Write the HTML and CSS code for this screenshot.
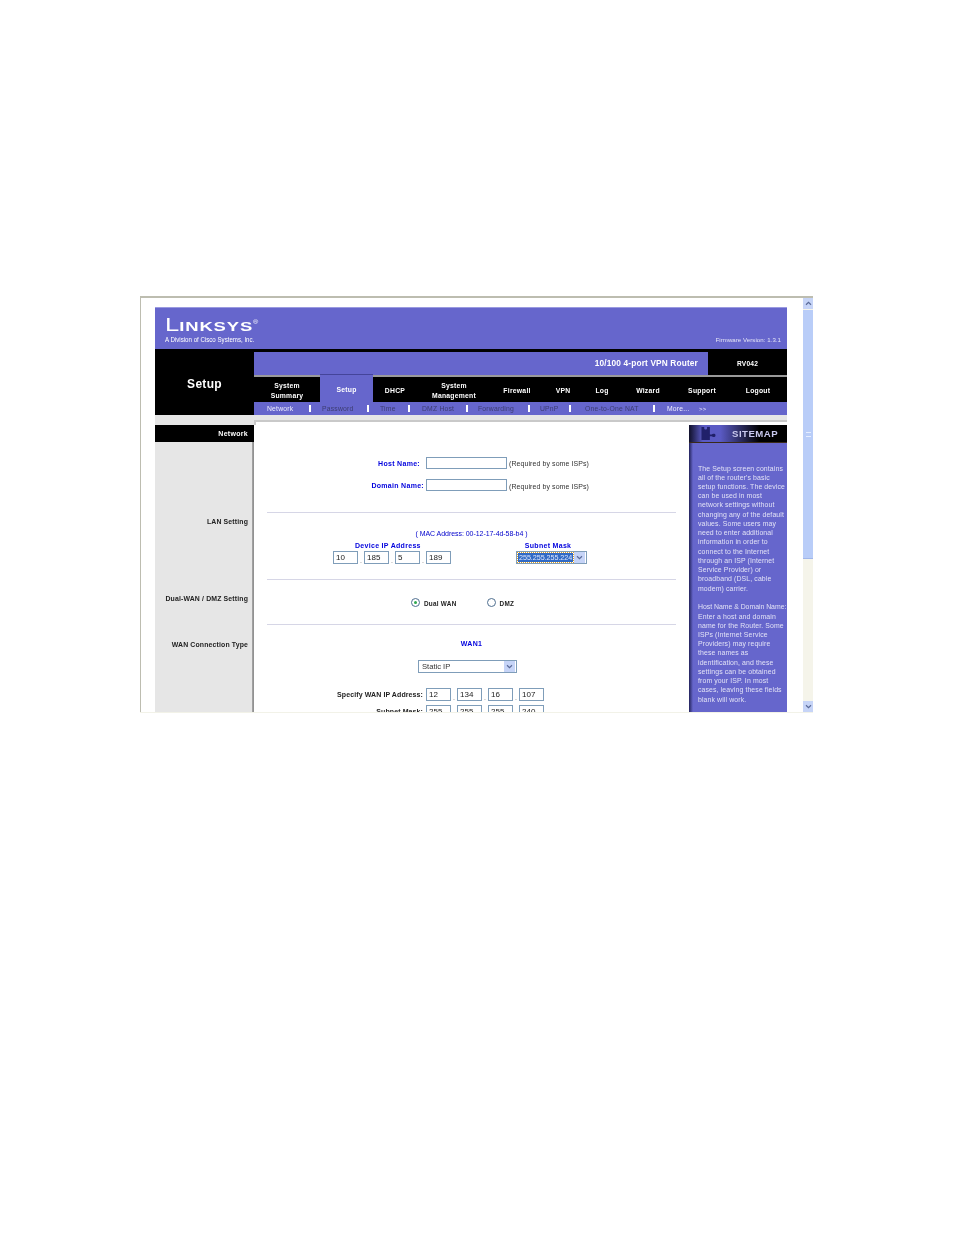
FILE: index.html
```html
<!DOCTYPE html>
<html lang="en">
<head>
<meta charset="utf-8">
<title>Linksys RV042 Setup</title>
<link rel="stylesheet" href="styles.css">
</head>
<body>
<div class="window">
  <div class="viewport">
    <header class="brand">
      <div class="logo"><div class="logo-word"><span class="cap">L</span>INKSYS<sup>®</sup></div><div class="logo-sub">A Division of Cisco Systems, Inc.</div></div>
      <div class="firmware">Firmware Version: 1.3.1</div>
    </header>
    <div class="masthead">
      <div class="page-title">Setup</div>
      <div class="mast-right">
        <div class="product"><div class="product-name">10/100 4-port VPN Router</div><div class="model">RV042</div></div>
        <nav class="tabs">
          <div class="tab">System<br>Summary</div>
          <div class="tab tab-active">Setup</div>
          <div class="tab">DHCP</div>
          <div class="tab">System<br>Management</div>
          <div class="tab">Firewall</div>
          <div class="tab">VPN</div>
          <div class="tab">Log</div>
          <div class="tab">Wizard</div>
          <div class="tab">Support</div>
          <div class="tab">Logout</div>
        </nav>
        <nav class="subnav">
          <span class="sub sub-on s1">Network</span><i class="sep"></i>
          <span class="sub s2">Password</span><i class="sep"></i>
          <span class="sub s3">Time</span><i class="sep"></i>
          <span class="sub s4">DMZ Host</span><i class="sep"></i>
          <span class="sub s5">Forwarding</span><i class="sep"></i>
          <span class="sub s6">UPnP</span><i class="sep"></i>
          <span class="sub s7">One-to-One NAT</span><i class="sep"></i>
          <span class="sub sub-on s8">More...</span><span class="sub sub-on s9">&gt;&gt;</span>
        </nav>
      </div>
    </div>
    <div class="band"><div class="band-left"></div><div class="band-right"></div></div>
    <div class="columns">
      <aside class="labels">
        <div class="labels-head">Network</div>
        <div class="label l-lan">LAN Setting</div>
        <div class="label l-dual">Dual-WAN / DMZ Setting</div>
        <div class="label l-wan">WAN Connection Type</div>
      </aside>
      <main class="form">
        <div class="row r-host"><label class="blue field-label pr6">Host Name:</label><input class="text-long" type="text"><span class="hint">(Required by some ISPs)</span></div>
        <div class="row r-domain"><label class="blue field-label pr2">Domain Name:</label><input class="text-long" type="text"><span class="hint">(Required by some ISPs)</span></div>
        <hr class="rule r1">
        <div class="mac">( MAC Address: 00-12-17-4d-58-b4 )</div>
        <div class="row r-caps"><span class="blue cap-ip">Device IP Address</span><span class="blue cap-mask">Subnet Mask</span></div>
        <div class="row r-ip">
          <input class="octet" type="text" value="10"><i class="dot">.</i><input class="octet" type="text" value="185"><i class="dot">.</i><input class="octet" type="text" value="5"><i class="dot">.</i><input class="octet" type="text" value="189">
          <div class="select sel-mask"><span class="sel-value">255.255.255.224</span><span class="sel-btn"><svg viewBox="0 0 8 6" class="chev"><path d="M1 1.5 4 4.5 7 1.5" /></svg></span></div>
        </div>
        <hr class="rule r2">
        <div class="row r-radio">
          <span class="radio radio-on"></span><span class="radio-text">Dual WAN</span>
          <span class="radio radio-b"></span><span class="radio-text">DMZ</span>
        </div>
        <hr class="rule r3">
        <div class="wan-title blue">WAN1</div>
        <div class="row r-type"><div class="select sel-type"><span class="plain">Static IP</span><span class="sel-btn"><svg viewBox="0 0 8 6" class="chev"><path d="M1 1.5 4 4.5 7 1.5" /></svg></span></div></div>
        <div class="row r-wan"><label class="field-label pr3 strong">Specify WAN IP Address:</label><input class="octet" type="text" value="12"><i class="dot">.</i><input class="octet" type="text" value="134"><i class="dot">.</i><input class="octet" type="text" value="16"><i class="dot">.</i><input class="octet" type="text" value="107"></div>
        <div class="row r-mask"><label class="field-label pr3 strong">Subnet Mask:</label><input class="octet" type="text" value="255"><i class="dot">.</i><input class="octet" type="text" value="255"><i class="dot">.</i><input class="octet" type="text" value="255"><i class="dot">.</i><input class="octet" type="text" value="240"></div>
      </main>
      <aside class="sitemap">
        <div class="sitemap-head">
          <svg class="puzzle" viewBox="0 0 18 16"><path d="M2 1h3v2c0 1 3 1 3 0V1h3v8h2c1-1 4-1 4 1s-3 2-4 1h-2v4H2z"/></svg>
          <span>SITEMAP</span>
        </div>
        <p class="help first">The Setup screen contains<br>all of the router's basic<br>setup functions. The device<br>can be used in most<br>network settings without<br>changing any of the default<br>values. Some users may<br>need to enter additional<br>information in order to<br>connect to the Internet<br>through an ISP (Internet<br>Service Provider) or<br>broadband (DSL, cable<br>modem) carrier.</p>
        <p class="help"><span class="help-title">Host Name &amp; Domain Name:</span><br>Enter a host and domain<br>name for the Router. Some<br>ISPs (Internet Service<br>Providers) may require<br>these names as<br>identification, and these<br>settings can be obtained<br>from your ISP. In most<br>cases, leaving these fields<br>blank will work.</p>
      </aside>
    </div>
  </div>
  <div class="scrollbar">
    <div class="sb-btn"><svg viewBox="0 0 8 6" class="chev"><path d="M1 4.5 4 1.5 7 4.5" /></svg></div>
    <div class="sb-thumb"><span class="grip"></span></div>
    <div class="sb-track"></div>
    <div class="sb-btn"><svg viewBox="0 0 8 6" class="chev"><path d="M1 1.5 4 4.5 7 1.5" /></svg></div>
  </div>
</div>
</body>
</html>
```
FILE: styles.css
```css
* { box-sizing: border-box; }
html, body { margin: 0; padding: 0; background: #fff; height: 1235px; overflow: hidden; }
body { padding: 296px 0 0 140px; font-family: "Liberation Sans", Arial, sans-serif; font-size: 7px; color: #111; }

.window { width: 673px; height: 416px; display: flex; border-top: 2px solid #bdbdb0; border-left: 1px solid #bdbdb0; filter: blur(.3px); box-shadow: 0 1px 0 #f2f2e8; }
.viewport { width: 662px; height: 414px; overflow: hidden; padding: 9px 0 0 14px; background: #fff; }

.brand { width: 632px; height: 42px; background: #6666cc; border-top: 1px solid #9a9ae0; display: flex; justify-content: space-between; }
.logo { padding: 10px 0 0 10px; color: #fff; }
.logo-word { font-size: 13px; line-height: 15px; font-weight: bold; letter-spacing: .6px; transform: scaleX(1.42); transform-origin: left; white-space: nowrap; }
.logo-word .cap { font-size: 18px; font-weight: normal; line-height: 15px; letter-spacing: 0; }
.logo-word sup { font-size: 5px; font-weight: normal; vertical-align: 7px; line-height: 0; letter-spacing: 0; }
.logo-sub { font-size: 6.6px; line-height: 8px; margin-top: 2px; transform: scaleX(.93); transform-origin: left; white-space: nowrap; }
.firmware { color: #e4e4f6; font-size: 6.1px; padding: 28px 6px 0 0; letter-spacing: .05px; }

.masthead { width: 632px; height: 66px; background: #000; display: flex; }
.page-title { width: 99px; color: #fff; font-weight: bold; font-size: 12px; text-align: center; padding-top: 28px; letter-spacing: .3px; }
.mast-right { width: 533px; padding-top: 3px; }
.product { height: 23px; display: flex; background: #6666cc; }
.product-name { width: 454px; color: #fff; font-weight: bold; font-size: 8.3px; line-height: 23px; text-align: right; padding-right: 10px; letter-spacing: .15px; }
.model { width: 79px; background: #000; color: #fff; font-weight: bold; font-size: 6.6px; line-height: 23px; text-align: center; letter-spacing: .2px; }
.tabs { height: 27px; display: grid; grid-template-columns: 66px 53px 44px 74px 52px 40px 38px 54px 54px 58px; background: #000; border-top: 2px solid #9a9a9a; }
.tab { color: #fff; font-weight: bold; font-size: 6.8px; line-height: 10px; letter-spacing: .25px; text-align: center; align-self: center; }
.tab-active { align-self: stretch; background: #6666cc; border-top: 1px solid #44449a; margin-top: -3px; line-height: 30px; }
.subnav { height: 13px; background: #6666cc; display: flex; align-items: center; white-space: nowrap; font-size: 6.8px; color: #3c3c70; letter-spacing: .2px; }
.sub-on { color: #eeeeff; }
.sep { width: 2px; height: 7px; background: #fff; }
.s1 { margin-left: 13px; width: 42px; }
.s2 { margin-left: 11px; width: 45px; }
.s3 { margin-left: 11px; width: 28px; }
.s4 { margin-left: 12px; width: 44px; }
.s5 { margin-left: 10px; width: 50px; }
.s6 { margin-left: 10px; width: 29px; }
.s7 { margin-left: 14px; width: 68px; }
.s8 { margin-left: 12px; width: 32px; }
.s9 { font-size: 6px; }

.band { width: 632px; height: 10px; display: flex; background: #e6e6e6; }
.band-left { width: 99px; }
.band-right { flex: 1; margin-top: 5px; background: #fff; border-top: 2px solid #c9c9c9; box-shadow: inset 2px 0 0 #c9c9c9; }

.columns { width: 632px; display: flex; height: 300px; }
.labels { width: 99px; background: linear-gradient(to right, #e6e6e6 97px, #a8a8a8 97px, #8a8a8a); text-align: right; font-weight: bold; color: #222; letter-spacing: .15px; }
.labels-head { height: 17px; background: #000; color: #fff; line-height: 17px; padding-right: 6px; letter-spacing: .3px; }
.label { padding-right: 6px; line-height: 8px; font-size: 6.9px; }
.l-lan { margin-top: 76px; }
.l-dual { margin-top: 69px; }
.l-wan { margin-top: 38px; }

.form { width: 435px; }
.row { display: flex; align-items: center; white-space: nowrap; }
.blue { color: #0000dd; font-weight: bold; letter-spacing: .3px; }
.strong { font-weight: bold; color: #222; letter-spacing: .1px; }
.field-label { width: 172px; text-align: right; flex: none; }
.pr6 { padding-right: 6px; }
.pr2 { padding-right: 2px; }
.pr3 { padding-right: 3px; }
input { border: 1px solid #7f9db9; background: #fff; padding: 0 0 0 2px; margin: 0; font: 8px/1 "Liberation Sans", Arial, sans-serif; color: #222; border-radius: 0; outline: 0; }
.text-long { width: 81px; height: 12px; }
.hint { margin-left: 2px; letter-spacing: .08px; color: #333; padding-top: 1px; }
.r-domain .hint { padding-top: 2px; }
.r-host { margin-top: 32px; height: 12px; }
.r-domain { margin-top: 10px; height: 12px; }
.rule { border: 0; height: 1px; background: #d6d6e6; margin: 0 13px; }
.r1 { margin-top: 21px; }
.r2 { margin-top: 15px; }
.r3 { margin-top: 17px; }
.mac { margin-top: 17px; height: 8px; line-height: 8px; text-align: center; color: #0000cc; letter-spacing: -.05px; }
.r-caps { margin-top: 3px; height: 8px; padding-left: 101px; }
.cap-mask { margin-left: 104px; }
.r-ip { margin-top: 2px; height: 13px; padding-left: 79px; }
.octet { width: 25px; height: 13px; flex: none; }
.dot { width: 6px; font-style: normal; text-align: center; color: #777; padding-top: 5px; }
.select { height: 13px; border: 1px solid #7f9db9; display: flex; align-items: center; background: #fff; padding: 0 1px; }
.sel-mask { width: 71px; margin-left: 65px; }
.sel-value { flex: 1; background: #316ac5; color: #dfe8ff; font-size: 7.2px; line-height: 9px; padding: 0 1px; outline: 1px dotted #e0a020; white-space: nowrap; letter-spacing: -.05px; }
.sel-btn { width: 11px; height: 11px; background: #c6d4f7; display: flex; align-items: center; justify-content: center; flex: none; margin-left: 1px; }
.chev { width: 7px; height: 5px; fill: none; stroke: #5a6a98; stroke-width: 1.4; }
.r-radio { margin-top: 18px; height: 9px; padding-left: 157px; }
.radio { width: 9px; height: 9px; border-radius: 50%; border: 1px solid #4f6f90; background: #fff; flex: none; display: flex; align-items: center; justify-content: center; }
.radio-on::after { content: ""; width: 3px; height: 3px; border-radius: 50%; background: #2fa84f; }
.radio-text { margin-left: 4px; font-size: 6.4px; font-weight: bold; color: #222; letter-spacing: .25px; padding-top: 1px; }
.radio-b { margin-left: 30px; }
.wan-title { margin-top: 15px; height: 8px; line-height: 8px; text-align: center; }
.r-type { margin-top: 12px; height: 13px; padding-left: 164px; }
.sel-type { width: 99px; }
.plain { flex: 1; font-size: 7.6px; color: #333; padding-left: 2px; }
.r-wan { margin-top: 15px; height: 13px; }
.r-mask { margin-top: 4px; height: 13px; }

.sitemap { width: 98px; background: linear-gradient(to right, #22225a, #6666cc 4px); color: #e2e2f6; height: 300px; }
.sitemap-head { height: 17px; background: linear-gradient(to right, #10102a, #5a5ac4 14%, #5a5ac4 32%, #000 72%); border-bottom: 1px solid #3a2a18; display: flex; align-items: center; color: #c9c9ee; font-size: 9.6px; font-weight: bold; letter-spacing: .5px; box-sizing: content-box; }
.puzzle { width: 18px; height: 15px; fill: #20206a; margin-left: 10px; }
.sitemap-head span { margin-left: 15px; }
.help { margin: 0; font-size: 6.9px; line-height: 9.23px; padding-left: 9px; white-space: nowrap; letter-spacing: .12px; }
.help-title { letter-spacing: -.02px; }
.first { margin-top: 20.5px; }
.help + .help { margin-top: 9.5px; }

.scrollbar { width: 10px; height: 414px; display: flex; flex-direction: column; background: #f5f4ea; }
.sb-btn { height: 11px; background: #c6d4f7; display: flex; align-items: center; justify-content: center; flex: none; }
.sb-thumb { height: 249px; margin-top: 1px; background: #b9cdf8; display: flex; align-items: center; justify-content: center; border-bottom: 1px solid #a0b6ea; }
.grip { width: 5px; height: 5px; border-top: 1px solid #e6eeff; border-bottom: 1px solid #e6eeff; }
.sb-track { flex: 1; }
```
